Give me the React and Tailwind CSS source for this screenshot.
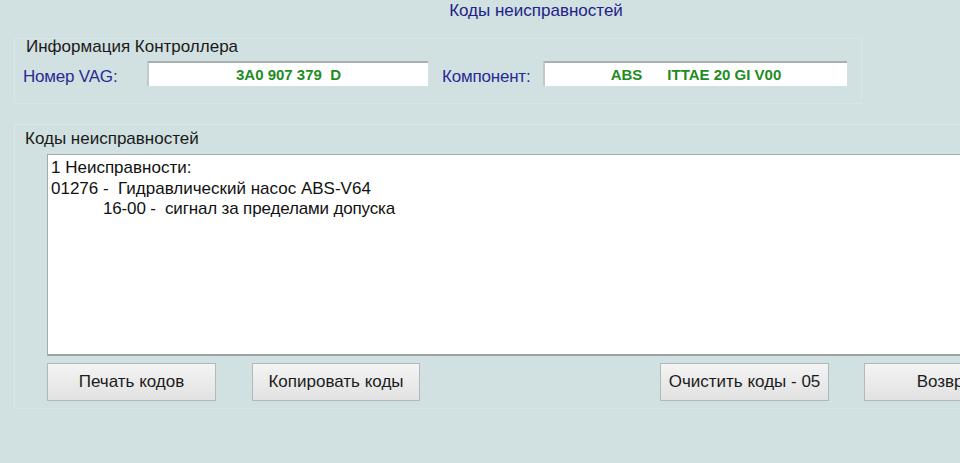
import React from 'react';

const Field = ({ width, children }) => (
  <div
    className={`${width} h-[25px] bg-white border-t-2 border-l-2 border-t-[#a9b0b0] border-l-[#c4c8c8] flex items-center justify-center text-[15px] font-bold text-[#1e8c1e] whitespace-pre`}
  >
    {children}
  </div>
);

const Btn = ({ width, children }) => (
  <button className={`${width} h-[38px] shrink-0 border border-[#b3b8b8] bg-gradient-to-b from-[#f4f4f4] to-[#e2e2e2] text-[17px] text-[#1c1c1c] flex items-center justify-center whitespace-nowrap`}>
    {children}
  </button>
);

export default function App() {
  return (
    <div className="w-[960px] h-[463px] overflow-hidden bg-[#d1e0e0] font-['Liberation_Sans',Arial,sans-serif] text-[#111]">
      {/* заголовок */}
      <div className="h-[24px] flex justify-center pl-[112px]">
        <span className="text-[17px] leading-[22px] text-[#22228a]">Коды неисправностей</span>
      </div>

      {/* Информация Контроллера */}
      <div className="ml-[14px] mt-[14px] w-[848px] h-[66px] border border-[#d9e6e6] px-[8px] flex flex-col">
        <div className="text-[17px] leading-[20px] pl-[3px] -mt-[2px] text-[#1a1a1a]">Информация Контроллера</div>
        <div className="flex items-center mt-[1px]">
          <span className="w-[124px] text-[17px] text-[#2a2a96] tracking-[-0.2px] pt-[6px]">Номер VAG:</span>
          <Field width="w-[281px]">3A0 907 379  D</Field>
          <span className="ml-[14px] w-[101px] text-[17px] text-[#2a2a96] tracking-[-0.2px] pt-[6px]">Компонент:</span>
          <Field width="w-[304px]">ABS      ITTAE 20 GI V00</Field>
        </div>
      </div>

      {/* Коды неисправностей */}
      <div className="ml-[14px] mt-[20px] w-[1000px] h-[285px] border border-[#d9e6e6] flex flex-col">
        <div className="text-[17px] leading-[20px] pl-[10px] pt-[4px] text-[#1a1a1a]">Коды неисправностей</div>
        <div className="ml-[32px] mt-[5px] h-[202px] bg-white border border-[#a6aaaa] border-b-2 border-b-[#9ea4a4] px-[3px] pt-[3px] text-[17px] leading-[20.5px] text-[#111]">
          <div>1 Неисправности:</div>
          <div className="whitespace-pre">01276 -  Гидравлический насос ABS-V64</div>
          <div className="whitespace-pre pl-[52px] tracking-[-0.15px]">16-00 -  сигнал за пределами допуска</div>
        </div>
        <div className="ml-[32px] mt-[7px] flex">
          <Btn width="w-[169px]">Печать кодов</Btn>
          <Btn width="w-[168px] ml-[36px]">Копировать коды</Btn>
          <Btn width="w-[169px] ml-[240px]">Очистить коды - 05</Btn>
          <Btn width="w-[169px] ml-[35px]">Возврат</Btn>
        </div>
      </div>
    </div>
  );
}
